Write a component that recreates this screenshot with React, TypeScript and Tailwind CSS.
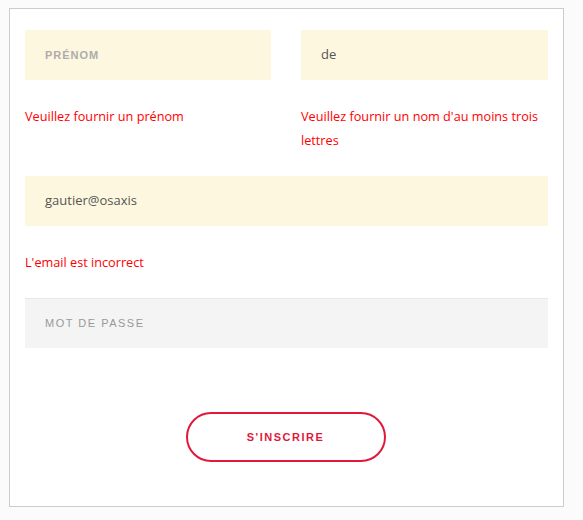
export default function App() {
  return (
    <div className="min-h-screen bg-[#fbfbfb] pt-2 pl-[9px] font-['Open_Sans',sans-serif]">
      <div className="w-[555px] h-[499px] bg-white border border-[#cccccc] px-[15px] pt-[21px]">
        <div className="grid grid-cols-[246px_1fr] gap-[30px]">
          <div>
            <div className="h-[50px] bg-[#fdf7df] flex items-center pl-5">
              <span className="text-[11px] font-semibold tracking-[1px] text-[#acacac] font-['Liberation_Sans',sans-serif]">PRÉNOM</span>
            </div>
            <p className="mt-6 text-[12.7px] leading-6 text-[#ff0000]">Veuillez fournir un prénom</p>
          </div>
          <div>
            <div className="h-[50px] bg-[#fdf7df] flex items-center pl-5">
              <span className="text-[13px] text-[#555555]">de</span>
            </div>
            <p className="mt-6 text-[12.7px] leading-6 text-[#ff0000]">Veuillez fournir un nom d'au moins trois lettres</p>
          </div>
        </div>

        <div className="mt-6 h-[50px] bg-[#fdf7df] flex items-center pl-5">
          <span className="text-[13px] text-[#555555]">gautier@osaxis</span>
        </div>
        <p className="mt-6 text-[12.7px] leading-6 text-[#ff0000]">L'email est incorrect</p>

        <div className="mt-6 h-[50px] bg-[#f4f4f4] border-t border-[#e8e8e8] flex items-center pl-5">
          <span className="text-[11px] tracking-[1.5px] text-[#999999] font-['Liberation_Sans',sans-serif]">MOT DE PASSE</span>
        </div>

        <div className="flex justify-center mt-16">
          <button className="w-[200px] h-[50px] -ml-[2px] rounded-full border-2 border-[#e2183b] text-[#e2183b] text-[11px] font-bold tracking-[1.5px] bg-white font-['Liberation_Sans',sans-serif]">
            S'INSCRIRE
          </button>
        </div>
      </div>
    </div>
  )
}
